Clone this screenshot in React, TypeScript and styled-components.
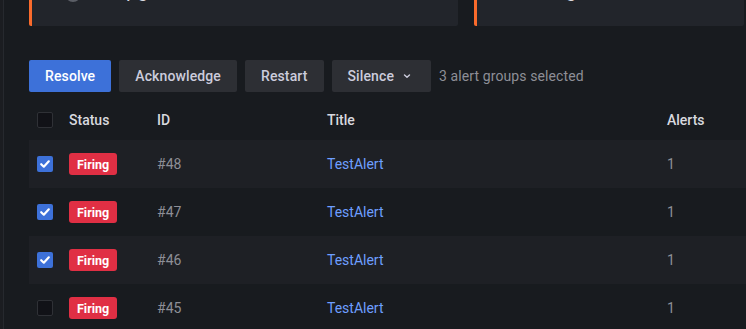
import React from "react";
import styled, { createGlobalStyle } from "styled-components";

const Global = createGlobalStyle`
  html, body { margin: 0; padding: 0; background: #181b1f; overflow: hidden; }
  body { font-family: Roboto, "Liberation Sans", sans-serif; color: #ccccdc; }
`;

const Shell = styled.div`
  display: flex;
  height: 329px;
  overflow: hidden;
  background: #181b1f;
`;

const Rail = styled.div`
  width: 3px;
  flex: none;
  background: #1b1d21;
  border-right: 1px solid #26292e;
`;

const Main = styled.main`
  flex: 1;
  min-width: 0;
  padding-left: 25px;
  margin-top: -40px;
  display: flex;
  flex-direction: column;
`;

const Cards = styled.div`
  display: grid;
  grid-template-columns: 429px 1fr;
  gap: 16px;
  margin-right: 2px;
`;

const Card = styled.div<{ $pad: number }>`
  height: 66px;
  box-sizing: border-box;
  background: #22252b;
  border-left: 3px solid #fa6b2c;
  border-radius: 2px;
  padding: 18px 0 0 ${(p) => p.$pad}px;
  display: flex;
  align-items: flex-start;
  gap: 32px;
`;

const Dot = styled.span`
  width: 16px;
  height: 16px;
  margin-top: 8px;
  border-radius: 50%;
  background: #5b5e66;
  flex: none;
`;

const CardText = styled.span`
  font-size: 20px;
  line-height: 24px;
  color: #d8d9df;
`;

const Toolbar = styled.div`
  display: flex;
  align-items: center;
  gap: 8px;
  margin-top: 34px;
`;

const Button = styled.button<{ $primary?: boolean }>`
  height: 32px;
  padding: 0 16px;
  border: none;
  border-radius: 2px;
  font-family: Roboto, "Liberation Sans", sans-serif;
  font-size: 14px;
  font-weight: 500;
  letter-spacing: 0.12px;
  display: flex;
  align-items: center;
  gap: 5px;
  cursor: pointer;
  background: ${(p) => (p.$primary ? "#3d71d9" : "#2d2f34")};
  color: ${(p) => (p.$primary ? "#ffffff" : "#ccccdc")};
`;

const Selected = styled.span`
  font-size: 14px;
  letter-spacing: 0.1px;
  color: #8e8f97;
`;

const Table = styled.div`
  margin-top: 8px;
  display: flex;
  flex-direction: column;
`;

const Row = styled.div<{ $header?: boolean; $striped?: boolean }>`
  display: grid;
  grid-template-columns: 32px 88px 170px 340px 1fr;
  align-items: center;
  height: ${(p) => (p.$header ? 40 : 48)}px;
  background: ${(p) => (p.$striped ? "#1e2025" : "transparent")};
`;

const Cell = styled.div<{ $tone?: "head" | "muted" | "link" }>`
  padding: 0 8px;
  font-size: 14px;
  white-space: nowrap;
  display: flex;
  align-items: center;
  font-weight: ${(p) => (p.$tone === "head" ? 500 : 400)};
  color: ${(p) =>
    p.$tone === "head"
      ? "#d8d9df"
      : p.$tone === "link"
      ? "#6e9fff"
      : "#8e8f97"};
`;

const Box = styled.span<{ $checked?: boolean }>`
  width: 16px;
  height: 16px;
  box-sizing: border-box;
  border-radius: 2px;
  display: flex;
  align-items: center;
  justify-content: center;
  background: ${(p) => (p.$checked ? "#3d71d9" : "#111217")};
  border: ${(p) => (p.$checked ? "none" : "1px solid #2f3136")};
`;

const Badge = styled.span`
  height: 22px;
  padding: 0 8px;
  border-radius: 3px;
  background: #e02f44;
  color: #ffffff;
  font-size: 12.5px;
  font-weight: 700;
  display: flex;
  align-items: center;
`;

const Check = ({ checked }: { checked?: boolean }) => (
  <Box $checked={checked}>
    {checked && (
      <svg width="12" height="12" viewBox="0 0 12 12">
        <path d="M2.2 6.2 L4.8 8.7 L9.8 3.3" fill="none" stroke="#fff" strokeWidth="2.2" strokeLinecap="round" strokeLinejoin="round" />
      </svg>
    )}
  </Box>
);

const Chevron = () => (
  <svg width="16" height="16" viewBox="0 0 16 16">
    <path d="M5.5 7 L8 9.3 L10.5 7" fill="none" stroke="#ccccdc" strokeWidth="1.4" strokeLinecap="round" strokeLinejoin="round" />
  </svg>
);

const rows = [
  { id: 48, checked: true },
  { id: 47, checked: true },
  { id: 46, checked: true },
  { id: 45, checked: false },
];

export default function App() {
  return (
    <Shell>
      <Global />
      <Rail />
      <Main>
        <Cards>
          <Card $pad={33}>
            <Dot />
            <CardText>Upgrade</CardText>
          </Card>
          <Card $pad={50}>
            <CardText>Firing</CardText>
          </Card>
        </Cards>
        <Toolbar>
          <Button $primary>Resolve</Button>
          <Button>Acknowledge</Button>
          <Button>Restart</Button>
          <Button>
            Silence
            <Chevron />
          </Button>
          <Selected>3 alert groups selected</Selected>
        </Toolbar>
        <Table>
          <Row $header>
            <Cell>
              <Check />
            </Cell>
            <Cell $tone="head">Status</Cell>
            <Cell $tone="head">ID</Cell>
            <Cell $tone="head">Title</Cell>
            <Cell $tone="head">Alerts</Cell>
          </Row>
          {rows.map((r, i) => (
            <Row key={r.id} $striped={i % 2 === 0}>
              <Cell>
                <Check checked={r.checked} />
              </Cell>
              <Cell>
                <Badge>Firing</Badge>
              </Cell>
              <Cell $tone="muted">#{r.id}</Cell>
              <Cell $tone="link">TestAlert</Cell>
              <Cell $tone="muted">1</Cell>
            </Row>
          ))}
        </Table>
      </Main>
    </Shell>
  );
}
